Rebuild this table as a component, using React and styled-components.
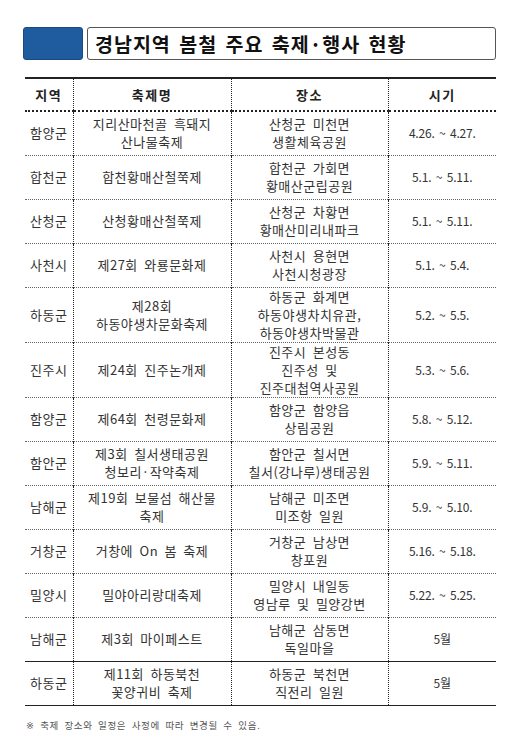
import React from "react";
import styled, { createGlobalStyle } from "styled-components";

const GlobalStyle = createGlobalStyle`
  html, body { margin: 0; padding: 0; background: #ffffff; }
  body { font-family: "Noto Sans CJK KR", "Noto Sans", sans-serif; color: #333; }
`;

const Page = styled.div`
  width: 531px;
  padding: 27px 35px 0 23px;
  box-sizing: border-box;
`;

const TitleBar = styled.div`
  display: flex;
  gap: 4px;
  height: 33px;
`;

const BlueBlock = styled.div`
  width: 60px;
  background: #1f5b9f;
  border-radius: 3px;
  border: 1px solid #1a4a82;
  box-sizing: border-box;
`;

const TitleBox = styled.div`
  flex: 1;
  display: flex;
  align-items: center;
  padding-left: 7px;
  border: 1px solid #555;
  border-radius: 3px;
  box-sizing: border-box;
`;

const Title = styled.h1`
  margin: 0;
  font-size: 19.5px;
  font-weight: 700;
  letter-spacing: 1px;
  word-spacing: 3px;
  color: #111;
`;

const Table = styled.table`
  margin: 17px 0 0 2px;
  width: 471px;
  border-collapse: collapse;
  table-layout: fixed;
  border-top: 2px solid #222;
  border-bottom: 1px solid #222;
`;

const Th = styled.th`
  height: 31px;
  padding: 0;
  font-size: 13px;
  font-weight: 700;
  letter-spacing: 1.5px;
  color: #222;
  text-align: center;
  border-bottom: 2px dotted #222;
  & + & { border-left: 1px dotted #222; }
`;

const Row = styled.tr`
  height: ${(p) => p.$h}px;
  border-top: ${(p) => (p.$solid ? "1px solid #222" : "1px dotted #666")};
`;

const Td = styled.td`
  padding: 0;
  font-size: ${(p) => (p.$date ? "12px" : "13px")};
  line-height: 18px;
  letter-spacing: ${(p) => (p.$date ? "-0.2px" : "0.5px")};
  word-spacing: ${(p) => (p.$date ? "2px" : "3px")};
  color: #333;
  text-align: center;
  vertical-align: middle;
  white-space: pre-line;
  & + & { border-left: 1px dotted #222; }
`;

const Footnote = styled.p`
  margin: 12px 0 0 3px;
  font-family: "DejaVu Sans", "Noto Sans CJK KR", sans-serif;
  font-size: 9.5px;
  letter-spacing: 0.6px;
  word-spacing: 2px;
  color: #555;
`;

const rows = [
  ["함양군", "지리산마천골 흑돼지\n산나물축제", "산청군 미천면\n생활체육공원", "4.26. ~ 4.27.", 44],
  ["합천군", "합천황매산철쭉제", "합천군 가회면\n황매산군립공원", "5.1. ~ 5.11.", 44],
  ["산청군", "산청황매산철쭉제", "산청군 차황면\n황매산미리내파크", "5.1. ~ 5.11.", 44],
  ["사천시", "제27회 와룡문화제", "사천시 용현면\n사천시청광장", "5.1. ~ 5.4.", 44],
  ["하동군", "제28회\n하동야생차문화축제", "하동군 화계면\n하동야생차치유관,\n하동야생차박물관", "5.2. ~ 5.5.", 53],
  ["진주시", "제24회 진주논개제", "진주시 본성동\n진주성 및\n진주대첩역사공원", "5.3. ~ 5.6.", 53],
  ["함양군", "제64회 천령문화제", "함양군 함양읍\n상림공원", "5.8. ~ 5.12.", 44],
  ["함안군", "제3회 칠서생태공원\n청보리·작약축제", "함안군 칠서면\n칠서(강나루)생태공원", "5.9. ~ 5.11.", 44],
  ["남해군", "제19회 보물섬 해산물\n축제", "남해군 미조면\n미조항 일원", "5.9. ~ 5.10.", 44],
  ["거창군", "거창에 On 봄 축제", "거창군 남상면\n창포원", "5.16. ~ 5.18.", 44],
  ["밀양시", "밀야아리랑대축제", "밀양시 내일동\n영남루 및 밀양강변", "5.22. ~ 5.25.", 44],
  ["남해군", "제3회 마이페스트", "남해군 삼동면\n독일마을", "5월", 44],
  ["하동군", "제11회 하동북천\n꽃양귀비 축제", "하동군 북천면\n직전리 일원", "5월", 44],
];

export default function App() {
  return (
    <Page>
      <GlobalStyle />
      <TitleBar>
        <BlueBlock />
        <TitleBox>
          <Title>경남지역 봄철 주요 축제·행사 현황</Title>
        </TitleBox>
      </TitleBar>
      <Table>
        <colgroup>
          <col style={{ width: 48 }} />
          <col style={{ width: 158 }} />
          <col style={{ width: 157 }} />
          <col style={{ width: 108 }} />
        </colgroup>
        <thead>
          <tr>
            <Th>지역</Th>
            <Th>축제명</Th>
            <Th>장소</Th>
            <Th>시기</Th>
          </tr>
        </thead>
        <tbody>
          {rows.map((r, i) => (
            <Row key={i} $h={r[4]} $solid={i === rows.length - 1}>
              <Td>{r[0]}</Td>
              <Td>{r[1]}</Td>
              <Td>{r[2]}</Td>
              <Td $date>{r[3]}</Td>
            </Row>
          ))}
        </tbody>
      </Table>
      <Footnote>※ 축제 장소와 일정은 사정에 따라 변경될 수 있음.</Footnote>
    </Page>
  );
}
